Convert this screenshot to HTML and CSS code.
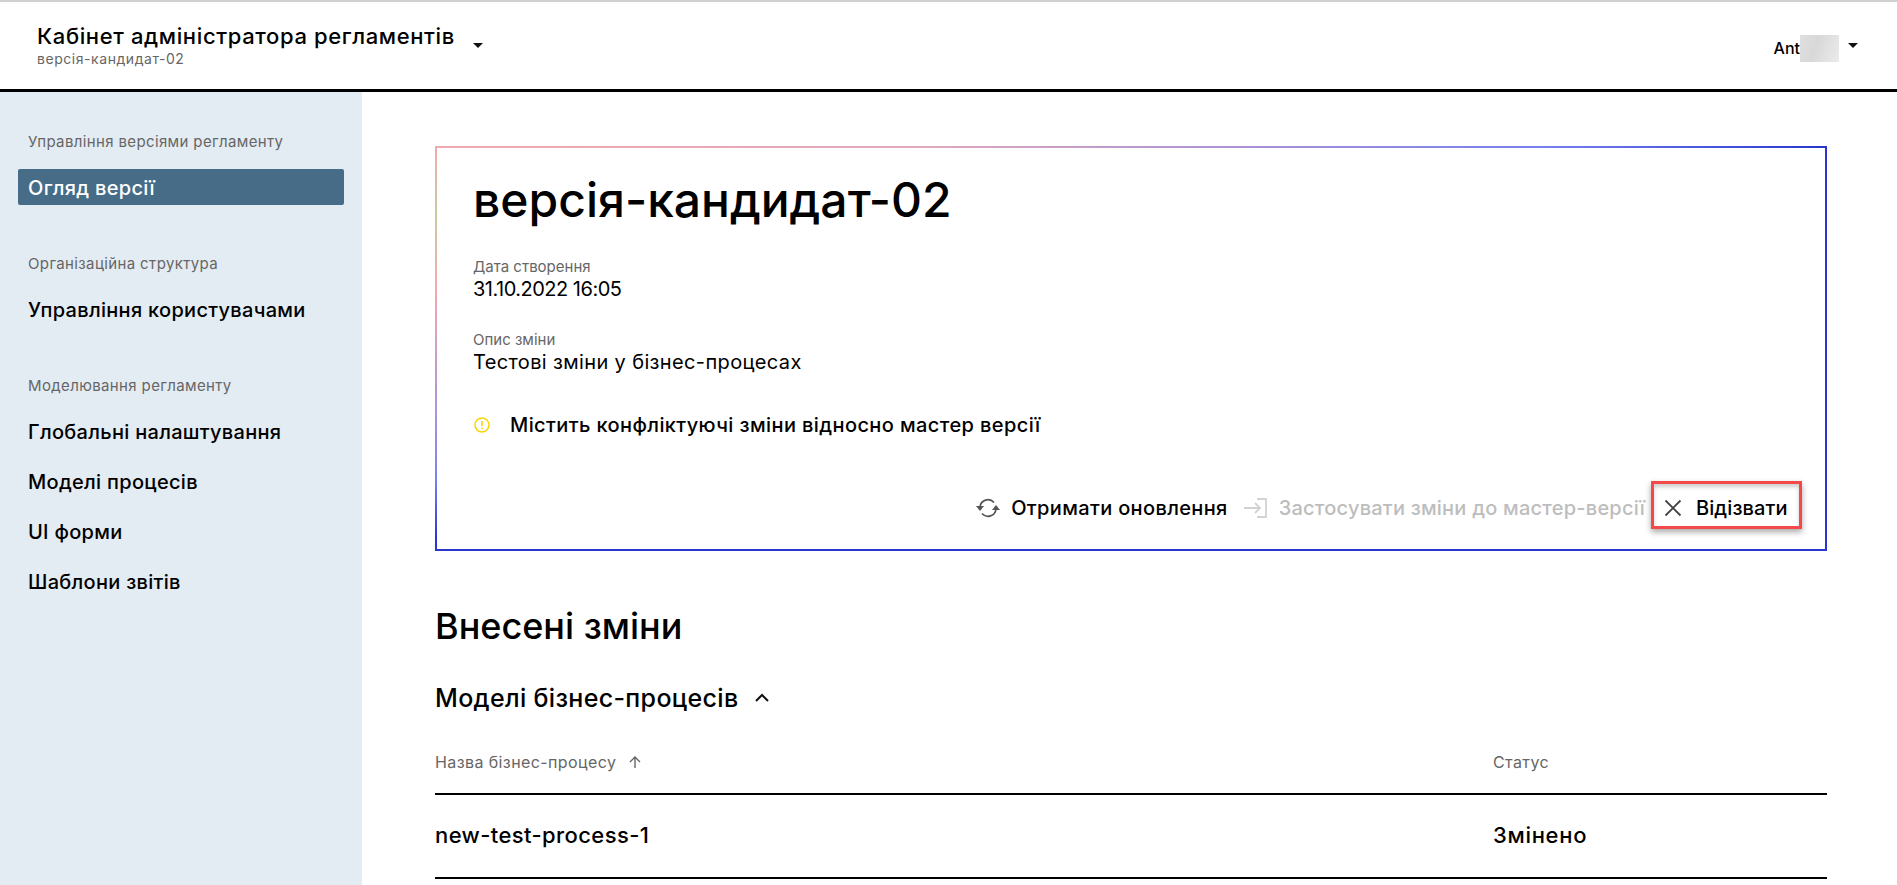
FILE: index.html
```html
<!DOCTYPE html>
<html>
	<head>
		<meta charset="utf-8">
		<title>Кабінет адміністратора регламентів</title>
		<link rel="stylesheet" href="styles.css">
	</head>
	<body>
		<header class="topbar">
			<div class="brand">
				<div class="brand-text">
					<div class="brand-title">Кабінет адміністратора регламентів</div>
					<div class="brand-version">версія-кандидат-02</div>
				</div>
				<span class="caret brand-caret"></span>
			</div>
			<div class="user">
				<span class="user-name">Ant</span>
				<span class="user-blur"></span>
				<span class="caret user-caret"></span>
			</div>
		</header>
		<div class="layout">
			<nav class="sidebar">
				<div class="nav-group">
					<div class="nav-label">Управління версіями регламенту</div>
					<a class="nav-item active">Огляд версії</a>
				</div>
				<div class="nav-group">
					<div class="nav-label">Організаційна структура</div>
					<a class="nav-item">Управління користувачами</a>
				</div>
				<div class="nav-group">
					<div class="nav-label">Моделювання регламенту</div>
					<a class="nav-item">Глобальні налаштування</a>
					<a class="nav-item">Моделі процесів</a>
					<a class="nav-item">UI форми</a>
					<a class="nav-item">Шаблони звітів</a>
				</div>
			</nav>
			<main class="content">
				<section class="version-card">
					<h1 class="version-title">версія-кандидат-02</h1>
					<div class="field field-date">
						<div class="field-label">Дата створення</div>
						<div class="field-value">31.10.2022 16:05</div>
					</div>
					<div class="field field-desc">
						<div class="field-label">Опис зміни</div>
						<div class="field-value">Тестові зміни у бізнес-процесах</div>
					</div>
					<div class="warning">
						<svg class="warning-icon" width="16" height="16" viewBox="0 0 16 16" fill="none" stroke="#fbd500" stroke-width="1.5">
							<circle cx="8" cy="8" r="7"/>
							<path d="M8 4v5M8 10.6v1.6"/>
						</svg>
						<span>Містить конфліктуючі зміни відносно мастер версії</span>
					</div>
					<div class="actions">
						<button class="action">
							<svg width="24" height="20" viewBox="0 0 24 20" fill="none" stroke="#555" stroke-width="1.7">
								<path d="M4 9A8 8 0 0 1 18 4.500"/>
								<path d="M20 11A8 8 0 0 1 6 15.500"/>
								<path d="M0 8h8l-4 5z" fill="#555" stroke="none"/>
								<path d="M16 12h8l-4-5z" fill="#555" stroke="none"/>
							</svg>
							<span>Отримати оновлення</span>
						</button>
						<button class="action disabled">
							<svg width="24" height="20" viewBox="0 0 24 20" fill="none" stroke="#d2d2d2" stroke-width="1.8">
								<path d="M0 10h16M11 5l5 5-5 5"/>
								<path d="M13 1h9v18h-9"/>
							</svg>
							<span>Застосувати зміни до мастер-версії</span>
						</button>
						<button class="action highlighted">
							<svg width="18" height="18" viewBox="0 0 18 18" fill="none" stroke="#444" stroke-width="1.8">
								<path d="M1.500 1.500l15 15M16.500 1.500l-15 15"/>
							</svg>
							<span>Відізвати</span>
						</button>
					</div>
				</section>

				<h2 class="changes-title">Внесені зміни</h2>
				<div class="group-title">
					<span>Моделі бізнес-процесів</span>
					<svg width="16" height="16" viewBox="0 0 16 16" fill="none" stroke="#111" stroke-width="2">
						<path d="M2 11l6-6 6 6"/>
					</svg>
				</div>
				<div class="table-row table-head">
					<div class="col-name">
						<span>Назва бізнес-процесу</span>
						<svg width="14" height="14" viewBox="0 0 14 14" fill="none" stroke="#666" stroke-width="1.4">
							<path d="M7 13V2M2 7l5-5 5 5"/>
						</svg>
					</div>
					<div class="col-status">Статус</div>
				</div>
				<div class="table-row table-body">
					<div class="col-name">new-test-process-1</div>
					<div class="col-status">Змінено</div>
				</div>
			</main>
		</div>
	</body>
</html>
```
FILE: styles.css
```css
html, body {
	height: 885px;
	overflow: hidden;
}

body {
	margin: 0;
	font-family: Inter, "Noto Sans", sans-serif;
	color: #000;
	background-color: #fff;
}

.topbar {
	height: 87px;
	display: flex;
	justify-content: space-between;
	align-items: flex-start;
	border-top: 2px solid #d0d0d0;
	border-bottom: 3px solid #000;
}

.brand {
	display: flex;
	align-items: flex-start;
	padding: 21px 0 0 37px;
}

.brand-title {
	font-size: 22px;
	font-weight: 500;
	letter-spacing: 0.63px;
	line-height: 27px;
}

.brand-version {
	font-size: 14px;
	letter-spacing: 0.55px;
	line-height: 17px;
	color: #666;
}

.caret {
	display: block;
	width: 0;
	height: 0;
	border-left: 5px solid transparent;
	border-right: 5px solid transparent;
	border-top: 5px solid #111;
}

.brand-caret {
	margin: 20px 0 0 18px;
}

.user {
	display: flex;
	align-items: flex-start;
	padding: 33px 39px 0 0;
}

.user-name {
	font-size: 16px;
	font-weight: 500;
	line-height: 26px;
}

.user-blur {
	width: 39px;
	height: 27px;
	background: linear-gradient(110deg, #dfe0e1, #d8d8d8 40%, #ebebeb);
}

.user-caret {
	margin: 8px 0 0 9px;
}

.layout {
	display: flex;
	height: 793px;
}

.sidebar {
	width: 362px;
	flex-shrink: 0;
	box-sizing: border-box;
	padding: 40px 18px 0;
	display: flex;
	flex-direction: column;
	gap: 49px;
	background-color: #e4ecf3;
}

.nav-group {
	display: flex;
	flex-direction: column;
	gap: 14px;
}

.nav-label {
	margin-bottom: 3px;
	padding-left: 10px;
	font-size: 15px;
	letter-spacing: 0.37px;
	line-height: 20px;
	color: #666;
}

.nav-item {
	height: 36px;
	padding-left: 10px;
	font-size: 20px;
	font-weight: 500;
	letter-spacing: 0.3px;
	line-height: 38px;
	border-radius: 2px;
}

.nav-item.active {
	color: #fff;
	background-color: #476c88;
}

.content {
	flex: 1;
	padding: 54px 70px 0 73px;
	min-width: 0;
}

.version-card {
	height: 405px;
	box-sizing: border-box;
	padding: 0 0 0 36px;
	display: flex;
	flex-direction: column;
	border: 2px solid transparent;
	background-origin: border-box;
	background-clip: border-box;
	background-repeat: no-repeat;
	background-image:
		linear-gradient(90deg, #f2a9af, #e0a8bc 35%, #a590d8 60%, #7480ee 80%, #2a35d0),
		linear-gradient(180deg, #f2a9af 0, #c9cca0 17%, #f4a9ae 35%, #a592dc 68%, #7a82f0 82%, #2a35d0 97%),
		linear-gradient(#2a35d0, #2a35d0),
		linear-gradient(#2a35d0, #2a35d0);
	background-size: 100% 2px, 2px 100%, 2px 100%, 100% 2px;
	background-position: top left, top left, top right, bottom left;
}

.version-title {
	margin: 24px 0 0;
	font-size: 48px;
	font-weight: 500;
	line-height: 56px;
}

.field-date {
	margin-top: 30px;
}

.field-desc {
	margin-top: 29px;
}

.field-label {
	font-size: 15px;
	line-height: 18px;
	color: #666;
}

.field-value {
	font-size: 20px;
	letter-spacing: 0.36px;
	line-height: 26px;
}

.field-date .field-value {
	letter-spacing: -0.5px;
}

.warning {
	display: flex;
	align-items: center;
	gap: 20px;
	margin-top: 37px;
	font-size: 20px;
	font-weight: 500;
	letter-spacing: 0.4px;
	line-height: 26px;
}

.warning-icon {
	margin-left: 1px;
}

.actions {
	display: flex;
	justify-content: flex-end;
	align-items: center;
	margin-top: auto;
	margin-bottom: 20px;
	margin-right: 23px;
}

.action {
	display: flex;
	align-items: center;
	gap: 11px;
	padding: 6px 0 0;
	border: none;
	background: none;
	font-family: inherit;
	font-size: 20px;
	font-weight: 500;
	letter-spacing: 0.35px;
	color: #000;
}

.action.disabled {
	margin-left: 16px;
	letter-spacing: 0.22px;
	color: #bdbdbd;
}

.action.highlighted {
	box-sizing: border-box;
	width: 151px;
	height: 48px;
	margin-left: 6px;
	padding-left: 10px;
	gap: 14px;
	letter-spacing: 0.1px;
	border: 3px solid #f54848;
	box-shadow: 0 3px 6px rgba(0, 0, 0, 0.35), inset 0 3px 4px rgba(0, 0, 0, 0.2);
}

.changes-title {
	margin: 54px 0 0;
	font-size: 36px;
	font-weight: 500;
	line-height: 42px;
}

.group-title {
	display: flex;
	align-items: center;
	gap: 15px;
	margin-top: 35px;
	font-size: 25px;
	font-weight: 500;
	letter-spacing: 0.33px;
	line-height: 32px;
}

.table-row {
	display: flex;
	border-bottom: 2px solid #000;
}

.col-name {
	flex: 1;
	display: flex;
	align-items: center;
	gap: 12px;
}

.col-status {
	width: 334px;
}

.table-head {
	margin-top: 17px;
	height: 62px;
	font-size: 16px;
	letter-spacing: 0.4px;
	line-height: 20px;
	color: #666;
}

.table-head > div {
	height: 20px;
	margin-top: 21px;
}

.table-body {
	height: 80px;
	padding-bottom: 2px;
	align-items: center;
	font-size: 22px;
	font-weight: 500;
	letter-spacing: 0.4px;
}

.table-body .col-status {
	letter-spacing: 0.7px;
}
```
